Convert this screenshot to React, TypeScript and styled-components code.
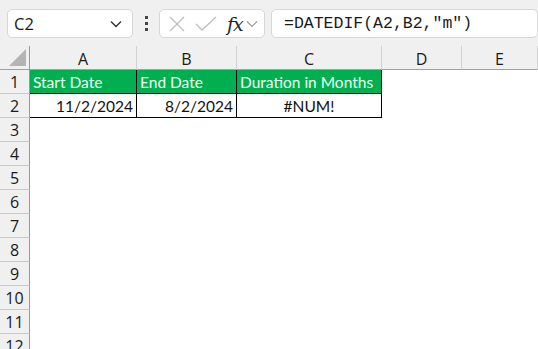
import React from 'react';
import styled, { createGlobalStyle } from 'styled-components';

const GlobalStyle = createGlobalStyle`
    html, body { margin:0; padding:0; background:#fff; }
    body { font-family: "Lato", "Liberation Sans", sans-serif; overflow:hidden; }
`

const StyledPage = styled.div`
    width:538px;
    height:349px;
    overflow:hidden;
    display:flex;
    flex-direction:column;
`
const StyledToolbar = styled.div`
    height:46px;
    flex:none;
    background:#f0f0f0;
    display:flex;
    align-items:center;
    padding:1px 0 0 7px;
    box-sizing:border-box;
    gap:6px;
`
const StyledBox = styled.div<{ $width?: number }>`
    height:29px;
    box-sizing:border-box;
    background:#fff;
    border:1px solid #d6d6d6;
    border-radius:5px;
    display:flex;
    align-items:center;
    width:${(p) => (p.$width ? p.$width + 'px' : 'auto')};
    flex:${(p) => (p.$width ? 'none' : '1')};
`
const StyledNameText = styled.span`
    flex:1;
    padding-left:6px;
    font-family:"Open Sans", "Liberation Sans", sans-serif;
    font-size:16.5px;
    color:#1a1a1a;
`
const StyledDots = styled.div`
    width:14px;
    display:flex;
    flex-direction:column;
    align-items:center;
    gap:3px;
    span {
        width:3px;
        height:3px;
        background:#444;
    }
`
const StyledFx = styled.span`
    font-family:"DejaVu Serif", "Liberation Serif", serif;
    font-style:italic;
    font-size:19px;
    color:#222;
    margin-left:10px;
    letter-spacing:-1px;
`
const StyledFormula = styled.span`
    padding-left:12px;
    font-family:"Liberation Mono", monospace;
    font-size:16.5px;
    color:#1a1a1a;
    margin-right:-40px;
    white-space:nowrap;
`
const StyledSheet = styled.div`
    display:grid;
    grid-template-columns:30px 107px 100px 145px 80px 1fr;
    grid-auto-rows:24px;
    font-family:"Lato", "Liberation Sans", sans-serif;
    font-size:15.5px;
`
const StyledCorner = styled.div`
    background:#f0f0f0;
    border-right:1px solid #9a9a9a;
    border-bottom:1px solid #a0a0a0;
    box-sizing:border-box;
    display:grid;
    place-items:end;
    padding:0 3px 3px 0;
`
const StyledTriangle = styled.div`
    width:17px;
    min-width:17px;
    height:17px;
    min-height:17px;
    background:#b4b4b4;
    clip-path:polygon(100% 0, 100% 100%, 0 100%);
`
const StyledColHead = styled.div`
    background:#f0f0f0;
    border-right:1px solid #d2d2d2;
    border-bottom:1px solid #a0a0a0;
    display:flex;
    align-items:center;
    justify-content:center;
    color:#1a1a1a;
    font-family:"Open Sans", "Liberation Sans", sans-serif;
    font-size:16px;
    padding-top:2px;
`
const StyledRowHead = styled.div`
    background:#f0f0f0;
    border-right:1px solid #9a9a9a;
    border-bottom:1px solid #c8c8c8;
    display:flex;
    align-items:center;
    justify-content:center;
    color:#1a1a1a;
    font-family:"Open Sans", "Liberation Sans", sans-serif;
    font-size:16px;
`
interface CellProps {
    $header?: boolean,
    $align?: 'left' | 'right' | 'center',
    $boxed?: boolean,
}
const StyledCell = styled.div<CellProps>`
    display:flex;
    align-items:center;
    justify-content:${(p) => p.$align === 'right' ? 'flex-end' : p.$align === 'center' ? 'center' : 'flex-start'};
    padding:0 3px;
    box-sizing:border-box;
    background:${(p) => p.$header ? '#00b050' : '#fff'};
    color:${(p) => p.$header ? '#f4fff6' : '#111'};
    border-right:${(p) => p.$boxed ? '1px solid #000' : 'none'};
    border-bottom:${(p) => p.$boxed ? '1px solid #000' : 'none'};
    white-space:nowrap;
    overflow:hidden;
`

const columns = ['A', 'B', 'C', 'D', 'E']

const data: { text: string, align: 'left' | 'right' | 'center' }[][] = [
    [
        { text: 'Start Date', align: 'left' },
        { text: 'End Date', align: 'left' },
        { text: 'Duration in Months', align: 'left' },
    ],
    [
        { text: '11/2/2024', align: 'right' },
        { text: '8/2/2024', align: 'right' },
        { text: '#NUM!', align: 'center' },
    ],
]

function App() {
    const rows = Array.from({ length: 12 }, (_, i) => i + 1)
    return (
        <StyledPage>
            <GlobalStyle />
            <StyledToolbar>
                <StyledBox $width={126}>
                    <StyledNameText>C2</StyledNameText>
                    <svg width="14" height="10" viewBox="0 0 14 10" style={{ marginRight: 9 }}>
                        <path d="M2 2.5 L7 7.5 L12 2.5" fill="none" stroke="#333" strokeWidth="1.4" />
                    </svg>
                </StyledBox>
                <StyledDots><span /><span /><span /></StyledDots>
                <StyledBox $width={106}>
                    <svg width="18" height="18" viewBox="0 0 18 18" style={{ marginLeft: 8 }}>
                        <path d="M2 2 L16 16 M16 2 L2 16" stroke="#bdbdbd" strokeWidth="1.3" />
                    </svg>
                    <svg width="22" height="18" viewBox="0 0 22 18" style={{ marginLeft: 9 }}>
                        <path d="M1 9 L7 15 L21 2" fill="none" stroke="#bdbdbd" strokeWidth="1.3" />
                    </svg>
                    <StyledFx>fx</StyledFx>
                    <svg width="12" height="8" viewBox="0 0 12 8" style={{ marginLeft: 3 }}>
                        <path d="M1 1.5 L6 6.5 L11 1.5" fill="none" stroke="#999" strokeWidth="1.2" />
                    </svg>
                </StyledBox>
                <StyledBox>
                    <StyledFormula>=DATEDIF(A2,B2,"m")</StyledFormula>
                </StyledBox>
            </StyledToolbar>
            <StyledSheet>
                <StyledCorner>
                    <StyledTriangle />
                </StyledCorner>
                {columns.map((c) => <StyledColHead key={c}>{c}</StyledColHead>)}
                {rows.map((r) => (
                    <React.Fragment key={r}>
                        <StyledRowHead>{r}</StyledRowHead>
                        {columns.map((c, ci) => {
                            const cell = data[r - 1] && data[r - 1][ci]
                            return (
                                <StyledCell
                                    key={c}
                                    $header={r === 1 && !!cell}
                                    $boxed={!!cell}
                                    $align={cell ? cell.align : 'left'}
                                >
                                    {cell ? cell.text : ''}
                                </StyledCell>
                            )
                        })}
                    </React.Fragment>
                ))}
            </StyledSheet>
        </StyledPage>
    )
}

export default App;
